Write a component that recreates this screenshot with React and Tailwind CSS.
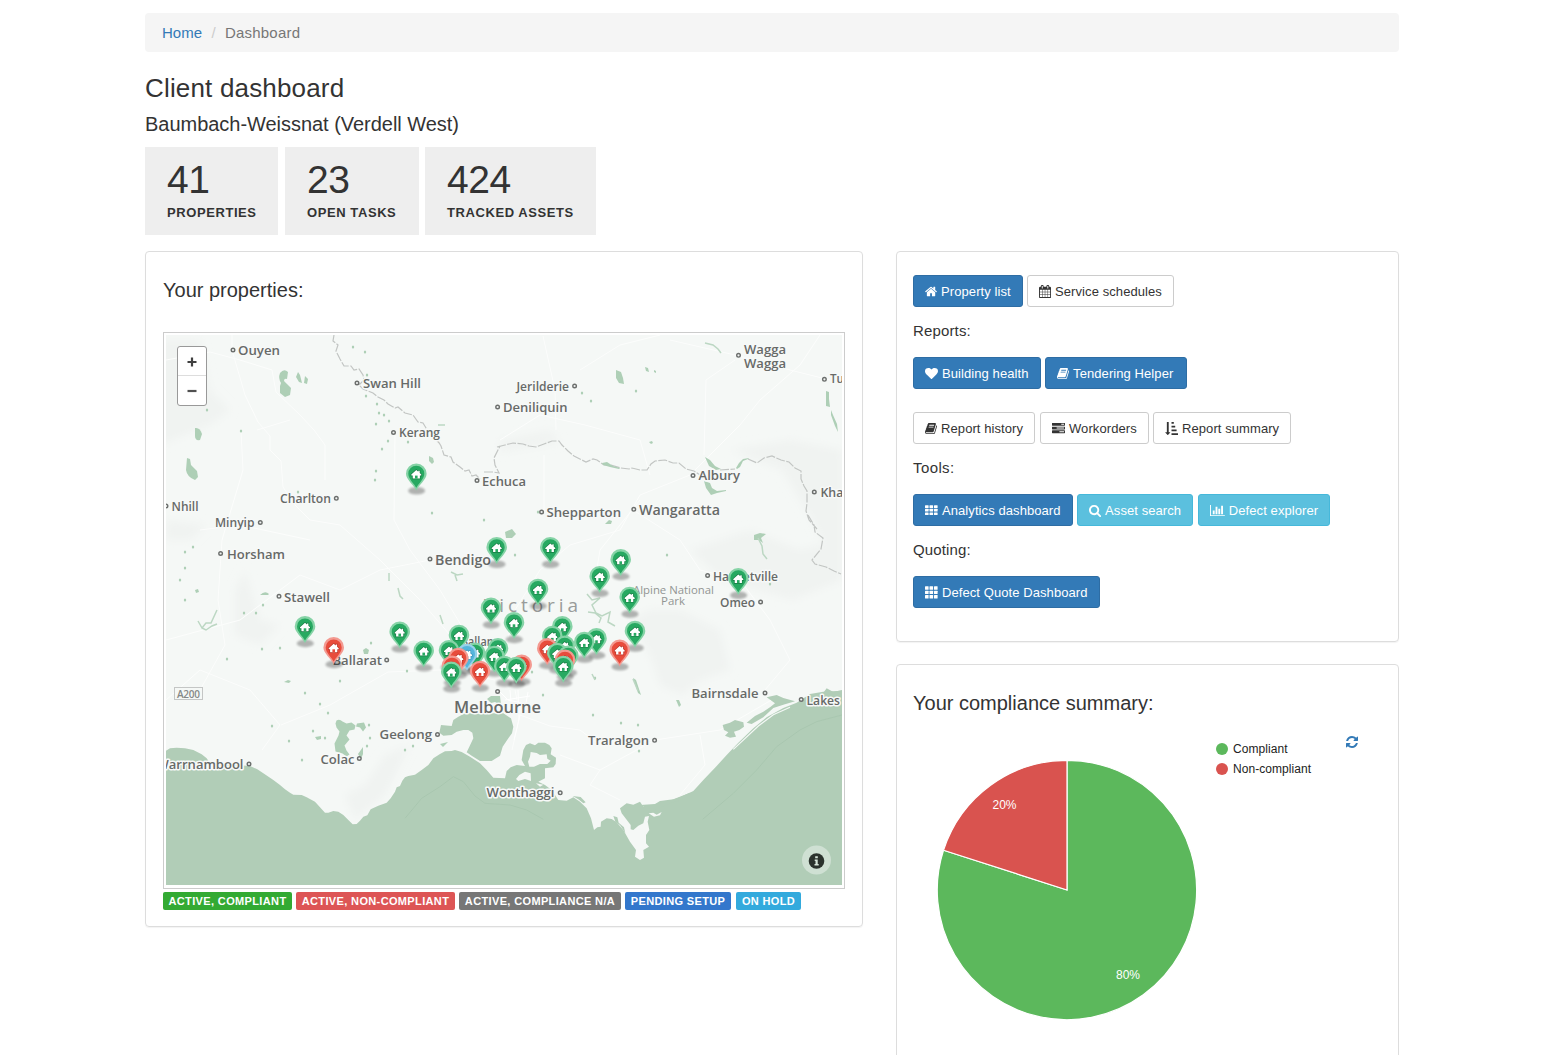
import React from "react";

const ICONS = {
  home: {
    box: "64 0 1664 1792",
    d: "M1472 992v480q0 26-19 45t-45 19h-384v-384h-256v384h-384q-26 0-45-19t-19-45v-480q0-1 .5-3t.5-3l575-474 575 474q1 2 1 6zm223-69l-62 74q-8 9-21 11h-3q-13 0-21-7l-692-577-692 577q-12 8-24 7-13-2-21-11l-62-74q-8-10-7-23.5t11-21.5l719-599q32-26 76-26t76 26l244 204v-195q0-14 9-23t23-9h192q14 0 23 9t9 23v408l219 182q10 8 11 21.5t-7 23.5z",
  },
  calendar: {
    box: "64 0 1664 1792",
    d: "M192 1664h288v-288h-288v288zm352 0h320v-288h-320v288zm-352-352h288v-320h-288v320zm352 0h320v-320h-320v320zm-352-384h288v-288h-288v288zm736 736h320v-288h-320v288zm-384-736h320v-288h-320v288zm768 736h288v-288h-288v288zm-384-352h320v-320h-320v320zm-352-864v-288q0-13-9.5-22.5t-22.5-9.5h-64q-13 0-22.5 9.5t-9.5 22.5v288q0 13 9.5 22.5t22.5 9.5h64q13 0 22.5-9.5t9.5-22.5zm736 864h288v-320h-288v320zm-384-384h320v-288h-320v288zm384 0h288v-288h-288v288zm32-480v-288q0-13-9.5-22.5t-22.5-9.5h-64q-13 0-22.5 9.5t-9.5 22.5v288q0 13 9.5 22.5t22.5 9.5h64q13 0 22.5-9.5t9.5-22.5zm384-64v1280q0 52-38 90t-90 38h-1408q-52 0-90-38t-38-90v-1280q0-52 38-90t90-38h128v-96q0-66 47-113t113-47h64q66 0 113 47t47 113v96h384v-96q0-66 47-113t113-47h64q66 0 113 47t47 113v96h128q52 0 90 38t38 90z",
  },
  heart: {
    box: "0 0 1792 1792",
    d: "M896 1664q-26 0-44-18l-624-602q-10-8-27.5-26t-55.5-65.5-68-97.5-53.5-121-23.5-138q0-220 127-344t351-124q62 0 126.5 21.5t120 58 95.5 68.5 76 68q36-36 76-68t95.5-68.5 120-58 126.5-21.5q224 0 351 124t127 344q0 221-229 450l-623 600q-18 18-44 18z",
  },
  book: {
    box: "64 0 1664 1792",
    d: "M1703 478q40 57 18 129l-275 906q-19 64-76.5 107.5t-122.5 43.5h-923q-77 0-148.5-53.5t-99.5-131.5q-24-67-2-127 0-4 3-27t4-37q1-8-3-21.5t-3-19.5q2-11 8-21t16.5-23.5 16.5-23.5q23-38 45-91.5t30-91.5q3-10 .5-30t-.5-28q3-11 17-28t17-23q21-36 42-92t25-90q1-9-2.500-32t.5-28q4-13 22-30.5t22-22.5q19-26 42.5-84.5t27.5-96.5q1-8-3-25.5t-2-26.5q2-8 9-18t18-23 17-21q8-12 16.5-30.5t15-35 16-36 19.5-32 26.5-23.5 36-11.5 47.5 5.5l-1 3q38-9 51-9h761q74 0 114 56t18 130l-274 906q-36 119-71.5 153.5t-128.5 34.5h-869q-27 0-38 15-11 16-1 43 24 70 144 70h923q29 0 56-15.5t35-41.5l300-987q7-22 5-57 38 15 59 43zm-1064 2q-4 13 2 22.5t20 9.5h608q13 0 25.5-9.5t16.5-22.5l21-64q4-13-2-22.5t-20-9.5h-608q-13 0-25.5 9.5t-16.5 22.5zm-83 256q-4 13 2 22.5t20 9.5h608q13 0 25.5-9.5t16.5-22.5l21-64q4-13-2-22.5t-20-9.5h-608q-13 0-25.5 9.5t-16.5 22.5z",
  },
  tasks: {
    box: "0 0 1792 1792",
    d: "M1024 1408h640v-128h-640v128zm-384-512h1024v-128h-1024v128zm640-512h384v-128h-384v128zm512 832v256q0 26-19 45t-45 19h-1664q-26 0-45-19t-19-45v-256q0-26 19-45t45-19h1664q26 0 45 19t19 45zm0-512v256q0 26-19 45t-45 19h-1664q-26 0-45-19t-19-45v-256q0-26 19-45t45-19h1664q26 0 45 19t19 45zm0-512v256q0 26-19 45t-45 19h-1664q-26 0-45-19t-19-45v-256q0-26 19-45t45-19h1664q26 0 45 19t19 45z",
  },
  sort: {
    box: "0 0 1792 1792",
    d: "M736 1440q0 12-10 24l-319 319q-10 9-23 9-12 0-23-9l-320-320q-15-16-7-35 8-20 30-20h192v-1376q0-14 9-23t23-9h192q14 0 23 9t9 23v1376h192q14 0 23 9t9 23zm1056 128v192q0 14-9 23t-23 9h-832q-14 0-23-9t-9-23v-192q0-14 9-23t23-9h832q14 0 23 9t9 23zm-192-512v192q0 14-9 23t-23 9h-640q-14 0-23-9t-9-23v-192q0-14 9-23t23-9h640q14 0 23 9t9 23zm-192-512v192q0 14-9 23t-23 9h-448q-14 0-23-9t-9-23v-192q0-14 9-23t23-9h448q14 0 23 9t9 23zm-192-512v192q0 14-9 23t-23 9h-256q-14 0-23-9t-9-23v-192q0-14 9-23t23-9h256q14 0 23 9t9 23z",
  },
  search: {
    box: "64 0 1664 1792",
    d: "M1216 832q0-185-131.5-316.5t-316.5-131.5-316.5 131.5-131.5 316.5 131.5 316.5 316.5 131.5 316.5-131.5 131.5-316.5zm512 832q0 52-38 90t-90 38q-54 0-90-38l-343-342q-179 124-399 124-143 0-273.5-55.5t-225-150-150-225-55.5-273.5 55.5-273.5 150-225 225-150 273.5-55.5 273.5 55.5 225 150 150 225 55.5 273.5q0 220-124 399l343 343q37 37 37 90z",
  },
  chart: {
    box: "0 0 2048 1792",
    d: "M640 896v512h-256v-512h256zm384-512v1024h-256v-1024h256zm1024 1152v128h-2048v-1536h128v1408h1920zm-640-896v768h-256v-768h256zm384-384v1152h-256v-1152h256z",
  },
  refresh: {
    box: "128 0 1536 1792",
    d: "M1639 1056q0 5-1 7-64 268-268 434.5t-478 166.5q-146 0-282.5-55t-243.5-157l-129 129q-19 19-45 19t-45-19-19-45v-448q0-26 19-45t45-19h448q26 0 45 19t19 45-19 45l-137 137q71 66 161 102t187 36q134 0 250-65t186-179q11-17 53-117 8-23 30-23h192q13 0 22.5 9.5t9.5 22.5zm25-800v448q0 26-19 45t-45 19h-448q-26 0-45-19t-19-45 19-45l138-138q-148-137-349-137-134 0-250 65t-186 179q-11 17-53 117-8 23-30 23h-199q-13 0-22.5-9.5t-9.5-22.5v-7q65-268 270-434.5t480-166.5q146 0 284 55.5t245 156.5l130-129q19-19 45-19t45 19 19 45z",
  },
};

function Icon({ name, className = "h-[13px]" }) {
  const icon = ICONS[name];
  return (
    <svg viewBox={icon.box} className={className + " shrink-0"} fill="currentColor">
      <path d={icon.d} />
    </svg>
  );
}

function Grid({ tall }) {
  const h = tall ? 3.4 : 2.7;
  const step = tall ? 4.4 : 3.6;
  return (
    <svg viewBox="0 0 13 13" className="h-[13px] w-[13px] shrink-0" fill="currentColor">
      {[0, 1, 2].map((r) =>
        [0, 1, 2].map((c) => (
          <rect key={r + "-" + c} x={c * 4.5} y={(tall ? 0.3 : 1.2) + r * step} width="3.6" height={h} rx="0.5" />
        ))
      )}
    </svg>
  );
}

const TONES = {
  primary: "bg-[#337ab7] border-[#2e6da4] text-white",
  plain: "bg-white border-[#ccc] text-[#333]",
  info: "bg-[#5bc0de] border-[#46b8da] text-white",
};

function Button({ tone, width, children }) {
  return (
    <button
      className={
        "flex h-8 shrink-0 items-center gap-1 rounded-[3px] border pl-[11px] text-[13px] leading-none tracking-[0.08px] whitespace-nowrap " +
        TONES[tone] + " " + width
      }
    >
      {children}
    </button>
  );
}

// [text, left, baseline, width, size]
const PLACES = [
  ["Ouyen", 238, 355, 42, 13],
  ["Swan Hill", 363, 388, 58, 13],
  ["Kerang", 399, 437, 41, 12.5],
  ["Echuca", 482, 485.5, 44, 13],
  ["Charlton", 280, 502.5, 51, 12.5],
  ["Nhill", 171.5, 511, 27, 12.5],
  ["Minyip", 215, 527, 39.5, 12.5],
  ["Horsham", 227, 558.5, 58, 13],
  ["Stawell", 284, 601.5, 46, 13],
  ["Bendigo", 435, 564.5, 56, 13.5],
  ["Jerilderie", 516.5, 391, 52.5, 12.5],
  ["Deniliquin", 503, 412, 64.5, 13],
  ["Wagga", 744, 354, 42, 13],
  ["Wagga", 744, 368, 42, 13],
  ["Tumut", 830, 383, 37, 12.5],
  ["Albury", 698.5, 480, 41.5, 13],
  ["Khancoban", 820.5, 496.5, 67, 12.5],
  ["Shepparton", 546.5, 517, 74.5, 13],
  ["Wangaratta", 639, 514.5, 81, 14],
  ["Harrietville", 713, 580.5, 65, 12.5],
  ["Omeo", 720, 606.5, 35, 12.5],
  ["Ballarat", 332.5, 664.5, 49.5, 13],
  ["Ballan", 461, 646, 32.5, 12],
  ["Melbourne", 454, 713, 87, 16],
  ["Geelong", 379.5, 739, 52.5, 13],
  ["Colac", 320.5, 763.5, 34, 13],
  ["Warrnambool", 156.5, 769, 87, 13],
  ["Wonthaggi", 486.5, 797, 68, 13],
  ["Traralgon", 588, 745, 61, 13],
  ["Bairnsdale", 691.5, 698, 67, 13],
  ["Lakes", 806.5, 705, 33.5, 12.5],
];

const DOTS = [
  [233, 350], [357, 383], [393.5, 432.5], [477, 480.5], [336.3, 498.3], [166, 506], [260.3, 522.5],
  [220.6, 553.5], [279, 596.3], [430, 559], [574.6, 386], [497.6, 407], [738.5, 355.3], [824.4, 379.3],
  [693, 475.5], [814.3, 492], [541.6, 512], [633.8, 509.3], [707.6, 575.5], [760.6, 602], [386.7, 660],
  [497.6, 691.5], [437.5, 734.5], [359.3, 758.5], [249, 764], [560.2, 792.8], [654.6, 740.3], [765, 693],
  [801.2, 699.5],
];

const MARKERS = [
  ["g", 416.3, 474], ["g", 496.7, 547.5], ["g", 550.3, 547.5], ["g", 620.7, 559.7], ["g", 599.7, 576.5],
  ["g", 738.3, 578.5], ["g", 538, 589.3], ["g", 629.7, 597.3], ["g", 491, 608], ["g", 514, 622.7],
  ["g", 305, 626.7], ["g", 562.3, 626.7], ["g", 635, 631.3], ["g", 399.7, 632], ["g", 459, 635.3],
  ["g", 552.3, 636.3], ["g", 596.5, 638.7], ["g", 584.3, 642.3], ["g", 564.7, 646], ["r", 333.7, 647.7],
  ["g", 498, 648.5], ["r", 547.3, 648.7], ["r", 619.7, 650], ["g", 449, 650.5], ["g", 423.7, 651],
  ["g", 475, 653], ["g", 557.3, 653.3], ["b", 467, 654.3], ["g", 568.3, 656], ["g", 494.3, 656.3],
  ["r", 458.3, 658.3], ["r", 565, 660], ["r", 521.7, 665], ["r", 452, 666], ["g", 563.3, 666.3],
  ["g", 504.3, 666.3], ["g", 516.3, 667.3], ["r", 480, 671.3], ["g", 451.3, 672],
];

const PIN = {
  g: ["#27a961", "#86d3a6", "#177a43"],
  r: ["#e84c3c", "#f39a91", "#b83226"],
  b: ["#55b5dc", "#97d1ea", "#3a92b8"],
};

function Marker({ kind, x, y }) {
  const [fill, rim, shade] = PIN[kind];
  return (
    <g transform={`translate(${x} ${y + 0.4})`}>
      <ellipse cx="0.3" cy="16.3" rx="8.5" ry="3.8" fill="#000" opacity="0.28" filter="url(#soft)" />
      <path d="M0 16C-2.600 10.500-10.300 5-10.300-.7A10.300 10.300 0 0 1 10.300-.7C10.300 5 2.600 10.500 0 16Z" fill={rim} />
      <path d="M0 13.400C-1.600 9.800-8 4.500-8-.7A8 8 0 0 1 8-.7C8 4.500 1.600 9.800 0 13.400Z" fill={fill} />
      <path d="M0-4.300-5 .100V1.200H-3.600V4.200H3.600V1.200H5V.100L3.400-1.300V-3.600H2V-2.600Z" fill="#fff" stroke={shade} strokeWidth="1.300" paintOrder="stroke" />
      <path d="M-1.300 1.200H1.300V4.200H-1.300Z" fill={fill} />
    </g>
  );
}

const LAKES = [
  "M280 373q4-5 8-1l-1 7q-3-1-3 2l3 3 4 4-1 7-5 2-5-4v-7l1-3q-3-5-1-10Z",
  "M298 372l2 3 2 8-3-1-3-5Z",
  "M305 376l3 3-1 5-3-1Z",
  "M195 428q5-1 7 6l-2 6q-5 1-5-4Z",
  "M187 458l3 1 1 6 6 6 1 6-3 3q-8-3-9-10Z",
  "M429 456l4 2 1 4-2 2-3-3Z",
  "M616 370l5 2 2 6 1 6-5-1-3-5Z",
  "M645 367l3 1 1 4-3-1Z",
  "M654 370l2 1v2l-2-1Z",
  "M602 463l5-1 6 4 7 2-1 1-9-2-7-2Z",
  "M705 457l5 3 5 6 6 3-5 1-7-4Z",
  "M736 468l3-5 4-4 6-1-1 1-5 2-3 6-3 2Z",
  "M704 481l6 2 2 5 5 3 9-1v1l-9 2-6 2-5-7Z",
  "M826 391l3 1v7l1 8-4-1Z",
  "M831 410l2 5 4 9 1 8-3-6-4-11Z",
  "M649 442l3-1 1 2-2 1Z",
  "M505 532l7-3 4 5-4 4h-6Z",
  "M605 524l4-4 3 1-1 3Z",
  "M754 535l6-2 6 1-5 4 2 5-4-3-5 0Z",
  "M260 595q5-5 9-1l-1 1Z",
  "M363 650l3-2 3 2-1 4h-4Z",
  "M284 682l4-2 3 1-2 2Z",
  "M195 590l3-1 1 3-3 1Z",
  "M336.500 720.500q3-2 6 1l4 2 5-1 4 3-1 4-5 1-3 5 3 4-5 6 2 5 3 4-3 2-4-3-7-2-1-8 4-8 1-4-3-4-1-4Z",
  "M357 723.500l7-1 2 5-3 4-3-4-4-1Z",
  "M358 754l5-7 0 7-2 5Z",
  "M315 737l6-1v3l-4 1Z",
  "M487 699l4-3 9 0 1 9-6-3-4 1Z",
  "M633 678l3 2 3 9 2 6-3-2Z",
  "M676 700l3 0 2 5-2 2Z",
  "M440 744l8-2-5 5Z",
];

const SPECKS = [
  [353, 347], [365, 352], [367, 375], [207, 410], [241, 431], [366, 396], [377, 404], [379, 413], [384, 415],
  [376, 424], [389, 421], [388, 441], [408, 442], [382, 449], [376, 471], [375, 480], [298, 492], [432, 513],
  [484, 520], [185, 552], [193, 547], [185, 568], [180, 580], [185, 600], [244, 613], [256, 613], [263, 605],
  [262, 649], [280, 648], [227, 659], [371, 643], [407, 671], [340, 681], [305, 693], [320, 704], [328, 713],
  [272, 726], [289, 741], [302, 760], [313, 731], [325, 738], [369, 725], [370, 738], [367, 746], [405, 750],
  [413, 746], [582, 393], [591, 401], [636, 391], [667, 555], [515, 555], [538, 512], [532, 672], [595, 678],
  [543, 695], [593, 715], [621, 723], [638, 725], [639, 751], [770, 584],
];

const ROADS = [
  "M232 335V350L245 395 258 422 270 436V450L281 461 283 487 295 505 310 520 340 525 380 560 420 600 450 635 480 680",
  "M166 360 210 352 240 360 272 370 276 392 300 415 314 430 325 445V480",
  "M241 431 243 470 222 540 218 600 225 645 200 690",
  "M166 640 240 620 300 575 340 590 380 570 430 560",
  "M257 430 290 420M310 540 240 525 200 530",
  "M395 433 394 520 410 550 440 590 470 640",
  "M166 700 200 670 250 690 280 725 262 750",
  "M281 725 330 705 388 672 440 670 495 680",
  "M500 440 540 415 585 425 640 440 650 475M543 336 555 390 556 430",
  "M580 370 620 345 660 335M670 340 735 355 790 370 830 380",
  "M820 335 800 365 760 400 740 425 710 455 690 475 640 495 620 530 570 545 540 570 515 610 500 670",
  "M704 455 706 380 735 360M544 455V512M640 500 600 550 595 580",
  "M633 510 680 540 700 570 740 580 770 620 790 660 765 690",
  "M515 690 520 715 550 726 580 730 600 745 655 740 720 730 780 695",
  "M520 715 512 750M600 770 590 785 620 800M655 740 600 770 560 755M700 735 705 765 680 795",
];

function PropertyMap() {
  return (
    <svg viewBox="166 335 676 550" className="h-[550px] w-[676px]" fontFamily="'Open Sans', 'Noto Sans', sans-serif">
      <defs>
        <filter id="soft" x="-30%" y="-50%" width="160%" height="200%">
          <feGaussianBlur stdDeviation="1" />
        </filter>
        <filter id="haze" x="-20%" y="-20%" width="140%" height="140%">
          <feGaussianBlur stdDeviation="4" />
        </filter>
      </defs>
      <rect x="166" y="335" width="676" height="550" fill="#f5f8f6" />

      {/* Hills and forests */}
      <g fill="#f0f3f1" filter="url(#haze)">
        <path d="M160 340h40l10 50 20 20-20 15-50 20Z" />
        <path d="M166 520l40 5-15 15-25 0Z" />
        <path d="M235 590l10-20 15 50 20 5-20 20-25-10Z" />
        <path d="M630 620l20-10 30 0 40 20 10 40-30 10-18 15-22-10-10-30Z" />
        <path d="M690 550l60-20 50 20 42-10v40l-50 20-70-20Z" />
        <path d="M730 450l60-10 52 10v130l-30-60-30-50Z" />
        <path d="M500 440l50-10 10 12-60 10Z" />
        <path d="M345 795l20-10 20-30 25-10-25 50-30 25Z" />
      </g>

      <g fill="none" stroke="#fcfdfc" strokeWidth="1">
        {ROADS.map((d) => <path key={d} d={d} />)}
      </g>

      {/* State border along the river */}
      <g fill="none" stroke="#c2c5c3" strokeWidth="1.200" strokeDasharray="9 1.500">
        <path d="M334 335l-1 6 5 4-2 6 4 8 4 7 7 0 3 4 5-1 4 6 1 5-5 5 4 4 10 4 5 4 6 3 4 4 7 4 3-1 7 6 8 2 5 7 5 1 3 5 6 6 3 5 5 5M438 441l3 5 3 9 7 2 2 5 7 5 5 4 4-1 3 6 4-1 4 4M827 572" />
        <path d="M497 447l8-2 8-2 10 1 6 2 7 1 8-3 8-3 7 0 3 4 6 6 6 5 8 4 4 2 7-3 4 1 7 5 7 0 10 3 8 1 3-1 8 2 7 0 4-6 4-3 10-1 8 3 6 0 7 6 8 2 6 4 7 2M720 470l15-1M748 459l9 4 7-5 8-2 9 4 8 2 6 6 6 3 0 8 3 7 3 5 0 12-1 8 3 9 8 9M808 515l6 10 1 7 8 6-2 11-9 11 3 4 11 3 8 4 7 3" />
        <path d="M484 472l9 0 6 1 -4-8-1-7 6-12M842 408" />
      </g>

      {/* Lakes and reservoirs */}
      <g fill="#aecfb6">
        {LAKES.map((d) => <path key={d} d={d} />)}
        {SPECKS.map(([x, y]) => <ellipse key={x + "-" + y} cx={x} cy={y} rx="1.200" ry="1.500" />)}
      </g>
      <g fill="none" stroke="#bcd7c3" strokeWidth="1.500">
        <path d="M198 621l4 7 4-5 5 0 6-13M202 628l4 2 6-4 5-2" />
        <path d="M451 572l6 3 6-1M455 575l2 6M398 588l2 8 3 3" />
        <path d="M587 594l5 6 8-2-8 7 4 8 6 3 8-4-2 10 7 4M588 612l7 1 6 5-2 5" />
        <path d="M758 538l4 8 1 8 4 5M592 674l3 6M633 679l5 12M440 615l3 9M389 573l0 8" />
        <path d="M705 343l8 2 5 4 3 4M438 425l7 0" />
      </g>

      <g transform="translate(160 690) scale(0.333333)">
        <g fill="#b1cdb7">
          <path d="M18 182 30 175 50 173 75 175 100 180 125 193 140 205 150 220 270 228 292 238 310 250 340 270 360 285 375 298 390 308 400 314 425 315 440 322 465 335 480 352 495 368 505 368 520 363 535 365 550 375 565 390 578 403 590 402 600 392 610 380 622 376 632 358 655 347 680 338 692 325 705 305 710 292 720 288 727 272 735 262 745 258 765 254 785 240 805 225 820 205 840 192 855 184 875 183 885 180 905 186 930 200 960 220 980 240 1000 263 1035 265 1040 243 1052 232 1070 225 1095 228 1085 210 1090 180 1098 165 1110 160 1125 166 1135 158 1155 158 1168 165 1175 175 1172 193 1188 203 1187 222 1180 232 1155 235 1155 265 1135 275 1155 285 1175 300 1195 330 1220 332 1240 322 1260 335 1280 355 1293 385 1302 420 1312 412 1322 410 1323 395 1340 385 1355 387 1370 397 1390 420 1410 455 1428 480 1425 500 1440 510 1452 503 1450 480 1467 470 1458 460 1458 435 1468 420 1463 395 1467 378 1455 380 1450 400 1435 407 1420 420 1412 418 1412 405 1385 370 1380 355 1400 340 1420 344 1440 335 1450 350 1470 352 1490 347 1520 335 1560 322 1600 303 1630 270 1670 228 1700 195 1735 158 1780 115 1820 82 1870 54 1910 38 1950 12 1990 5 2046 2V585H18Z" />
          <path d="M915 70H1030L1053 85 1060 110 1056 130 1045 145 1028 170 1020 197 995 213 960 213 935 197 920 187 928 170 940 145 937 128 925 120 910 120 890 125 875 135 850 137 838 128 843 105 875 108 880 90 895 80Z" />
          <path d="M1238 318 1262 321 1277 337 1270 340 1255 328Z" />
          <path d="M1360 378 1372 382 1376 398 1392 412 1396 430 1380 405 1366 395Z" />
          <path d="M1440 345 1485 342 1500 333 1540 328 1590 308 1575 328 1530 340 1490 358 1460 355Z" />
          <path d="M1688 105 1710 98 1725 90 1750 97 1752 110 1738 120 1722 125 1728 140 1710 143 1695 137 1705 127 1692 120Z" />
          <path d="M1760 98 1785 78 1810 65 1832 50 1845 40 1820 22 1850 15 1870 24 1905 34 1870 44 1840 54 1810 82 1775 102Z" />
          <path d="M1990 8 2000-5 2020 6 2046 0V30H1980Z" />
        </g>
        <g fill="#f5f8f6">
          <path d="M1110 200 1112 186 1130 189 1140 195 1160 193 1162 206 1172 212 1162 222 1140 222 1122 230 1108 230 1104 215Z" />
          <path d="M1068 267 1078 255 1095 245 1112 250 1113 273 1095 267 1075 273Z" />
          <path d="M1466 370 1480 368 1490 374 1505 366 1500 376 1482 380Z" />
          <path d="M1128 280 1150 284 1140 290Z" />
        </g>
        <path d="M1720 178 1795 108 1840 74 1890 52" fill="none" stroke="#f5f8f6" strokeWidth="3.500" />
        <path d="M735 385 785 325 840 290 880 260 910 275 945 318 975 340 1050 345 1100 360 1150 388M1628 388 1720 310 1790 240 1850 170 1920 120 1970 95 2046 75" fill="none" stroke="#a9c7b0" strokeWidth="3" />
      </g>

      <g fill="none" stroke="#fff" strokeWidth="1">
        <path d="M500 692l8 8 14 3M510 690l2 24M505 700l25-4M518 690l1 30M528 692l-4 22M520 715l-6 25" />
      </g>

      {/* Place labels */}
      <text x="484" y="612" fontSize="19" fill="#999c9a" textLength="94">Victoria</text>
      <g fill="#929593" stroke="#f5f8f6" strokeWidth="1.500" paintOrder="stroke" fontSize="11.500" fontWeight="500">
        <text x="633" y="593.500" textLength="81" lengthAdjust="spacingAndGlyphs">Alpine National</text>
        <text x="661" y="604.500" textLength="24" lengthAdjust="spacingAndGlyphs">Park</text>
      </g>
      <g fill="#676a68" stroke="#f7f9f8" strokeWidth="3" strokeLinejoin="round" paintOrder="stroke" fontWeight="600">
        {PLACES.map(([name, x, y, w, size]) => (
          <text key={name + y} x={x} y={y} fontSize={size} textLength={w} lengthAdjust="spacingAndGlyphs">{name}</text>
        ))}
      </g>
      <g fill="#f1f3f2" stroke="#6c6f6d" strokeWidth="1.400">
        {DOTS.map(([x, y]) => <circle key={x + "-" + y} cx={x} cy={y} r="1.800" />)}
      </g>
      <rect x="174.500" y="687.500" width="28" height="12" fill="#f5f8f6" stroke="#c4c6c5" />
      <text x="177" y="697.500" fontSize="10" fontWeight="600" fill="#858886" textLength="23">A200</text>

      {MARKERS.map(([kind, x, y]) => <Marker key={x + "-" + y} kind={kind} x={x} y={y} />)}

      {/* Attribution toggle */}
      <circle cx="816.500" cy="860" r="14.500" fill="#cfe0d3" />
      <circle cx="816.500" cy="861" r="7.800" fill="#2b322d" />
      <path d="M815.200 856.200h2.600v2h-2.600ZM814.700 859.500h3v4.500h1v1.500h-4.200V864h1v-3h-.8Z" fill="#d7e5da" />
    </svg>
  );
}

function Stat({ value, label, width }) {
  return (
    <div className={"h-[88px] bg-[#eee] pl-[22px] pt-[11px] " + width}>
      <div className="text-[39px] leading-[43px] tracking-[-0.4px]">{value}</div>
      <div className="text-[13px] leading-[23px] font-bold tracking-[0.58px] whitespace-nowrap">{label}</div>
    </div>
  );
}

function Tag({ className, children }) {
  return (
    <span className={"flex h-[18px] items-center justify-center rounded-[2px] text-[11px] font-bold tracking-[0.36px] whitespace-nowrap text-white " + className}>
      {children}
    </span>
  );
}

function PieChart() {
  return (
    <svg viewBox="0 0 262 262" className="h-[262px] w-[262px]" fontFamily="'Liberation Sans', Arial, sans-serif" fontSize="12">
      <g stroke="#fff" strokeWidth="1.200">
        <path d="M131 131V1.300A129.700 129.700 0 1 1 7.500 91.200Z" fill="#5cb85c" />
        <path d="M131 131 7.500 91.200A129.700 129.700 0 0 1 131 1.300Z" fill="#d9534f" />
      </g>
      <text x="56.500" y="50" fill="#fff">20%</text>
      <text x="180" y="220" fill="#fff">80%</text>
    </svg>
  );
}

export default function App() {
  return (
    <div className="h-screen overflow-hidden bg-white font-['Liberation_Sans',Arial,sans-serif] text-[15px] text-[#333]">
      <div className="ml-[145px] w-[1254px] pt-[13px]">
        <nav className="flex h-[39px] items-center rounded-[4px] bg-[#f5f5f5] pt-[2px] pl-[17px]">
          <a className="text-[#337ab7]">Home</a>
          <span className="w-[23px] text-center text-[#ccc]">/</span>
          <span className="tracking-[0.2px] text-[#777]">Dashboard</span>
        </nav>

        <h1 className="mt-[21px] text-[26px] leading-[30px] tracking-[0.17px]">Client dashboard</h1>
        <h2 className="mt-[9px] text-[20px] leading-6 tracking-[-0.03px]">Baumbach-Weissnat (Verdell West)</h2>

        <div className="mt-[11px] flex">
          <Stat value="41" label="PROPERTIES" width="w-[133px]" />
          <Stat value="23" label="OPEN TASKS" width="ml-[7px] w-[134px]" />
          <Stat value="424" label="TRACKED ASSETS" width="ml-[6px] w-[171px]" />
        </div>

        <div className="mt-4 flex items-start justify-between">
          <section className="h-[676px] w-[718px] rounded-[4px] border border-[#ddd] pl-[17px] pt-[26px] shadow-[0_1px_1px_rgba(0,0,0,0.05)]">
            <h3 className="text-[20px] leading-6">Your properties:</h3>
            <div className="relative mt-[30px] h-[557px] w-[682px] border border-[#ccc] p-[2px]">
              <PropertyMap />
              <div className="absolute top-[13px] left-[13px] flex h-[60px] w-[30px] flex-col rounded-[3px] border border-[#999] bg-white">
                <div className="flex h-[29px] items-center justify-center border-b border-[#ddd] pt-px">
                  <svg viewBox="0 0 10 10" className="h-[10px] w-[10px]" stroke="#404040" strokeWidth="2.200">
                    <path d="M.5 5h9M5 .5v9" />
                  </svg>
                </div>
                <div className="flex flex-1 items-center justify-center">
                  <svg viewBox="0 0 10 10" className="h-[10px] w-[10px]" stroke="#505050" strokeWidth="2.200">
                    <path d="M.5 5h9" />
                  </svg>
                </div>
              </div>
            </div>
            <div className="mt-[3px] flex">
              <Tag className="w-[129px] bg-[#3a3]">ACTIVE, COMPLIANT</Tag>
              <Tag className="ml-1 w-[159px] bg-[#d55]">ACTIVE, NON-COMPLIANT</Tag>
              <Tag className="ml-1 w-[162px] bg-[#777]">ACTIVE, COMPLIANCE N/A</Tag>
              <Tag className="ml-1 w-[106px] bg-[#37c]">PENDING SETUP</Tag>
              <Tag className="ml-[5px] w-[65px] bg-[#3ad]">ON HOLD</Tag>
            </div>
          </section>

          <div className="w-[503px]">
            <section className="h-[391px] rounded-[4px] border border-[#ddd] pl-4 pt-[23px] shadow-[0_1px_1px_rgba(0,0,0,0.05)]">
              <div className="flex gap-1">
                <Button tone="primary" width="w-[110px]"><Icon name="home" />Property list</Button>
                <Button tone="plain" width="w-[147px]"><Icon name="calendar" />Service schedules</Button>
              </div>
              <p className="mt-[13px] leading-[22px] tracking-[0.15px]">Reports:</p>
              <div className="mt-[15px] flex gap-1">
                <Button tone="primary" width="w-[128px]"><Icon name="heart" />Building health</Button>
                <Button tone="primary" width="w-[142px]"><Icon name="book" />Tendering Helper</Button>
              </div>
              <div className="mt-[23px] flex">
                <Button tone="plain" width="w-[122px]"><Icon name="book" />Report history</Button>
                <Button tone="plain" width="ml-[5px] w-[109px]"><Icon name="tasks" />Workorders</Button>
                <Button tone="plain" width="ml-1 w-[138px]"><Icon name="sort" />Report summary</Button>
              </div>
              <p className="mt-[13px] leading-[22px] tracking-[0.4px]">Tools:</p>
              <div className="mt-[15px] flex">
                <Button tone="primary" width="w-[160px]"><Grid />Analytics dashboard</Button>
                <Button tone="info" width="ml-1 w-[116px]"><Icon name="search" />Asset search</Button>
                <Button tone="info" width="ml-[5px] w-[132px]"><Icon name="chart" />Defect explorer</Button>
              </div>
              <p className="mt-[13px] leading-[22px] tracking-[0.15px]">Quoting:</p>
              <div className="mt-[15px] flex">
                <Button tone="primary" width="w-[187px]"><Grid tall />Defect Quote Dashboard</Button>
              </div>
            </section>

            <section className="mt-[22px] h-[440px] rounded-[4px] border border-[#ddd] pl-4 pt-[26px]">
              <h3 className="text-[20px] leading-6">Your compliance summary:</h3>
              <div className="flex pt-[20px] pl-[23px]">
                <div className="pt-[24px]"><PieChart /></div>
                <div className="ml-[18px] w-[130px] pt-[4px] text-[12px] leading-5 tracking-[0.06px] text-[#222]">
                  <div className="flex items-center gap-[5px]"><span className="-mt-px h-3 w-3 rounded-full bg-[#5cb85c]" />Compliant</div>
                  <div className="flex items-center gap-[5px]"><span className="-mt-px h-3 w-3 rounded-full bg-[#d9534f]" />Non-compliant</div>
                </div>
                <a className="text-[#337ab7]"><Icon name="refresh" className="h-[14px]" /></a>
              </div>
            </section>
          </div>
        </div>
      </div>
    </div>
  );
}
